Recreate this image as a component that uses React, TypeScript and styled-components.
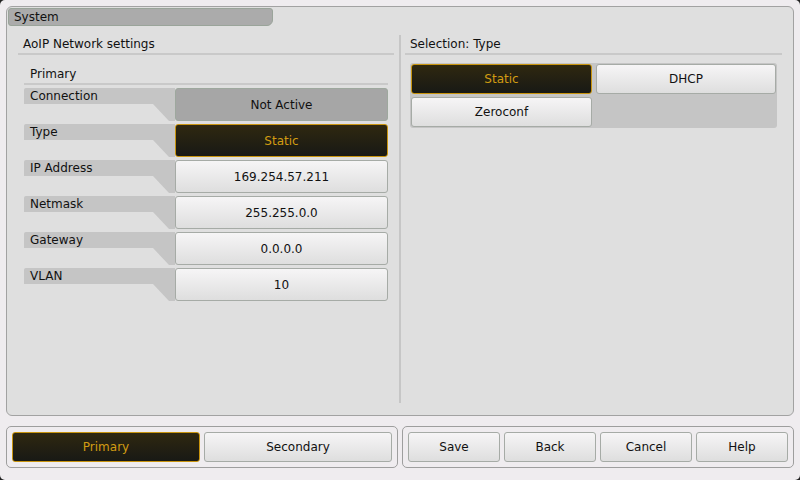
import styled, { createGlobalStyle, css } from "styled-components";

const GlobalStyle = createGlobalStyle`
  html, body {
    margin: 0;
    padding: 0;
    background: #222;
  }
  * {
    box-sizing: border-box;
  }
`;

const Screen = styled.div`
  width: 800px;
  height: 480px;
  background: #efecef;
  border-radius: 5px;
  padding: 6px 6px 0 6px;
  font-family: "DejaVu Sans", "Liberation Sans", sans-serif;
  font-size: 12px;
  color: #111;
  display: flex;
  flex-direction: column;
  overflow: hidden;
`;

const MainPanel = styled.div`
  height: 410px;
  background: #dfdfdf;
  border: 1px solid #a2a2a2;
  border-radius: 6px;
  padding: 1px;
  display: flex;
  flex-direction: column;
`;

const TitleTab = styled.div`
  width: 265px;
  height: 18px;
  background: #ababab;
  border: 1px solid #9aa49a;
  border-radius: 3px 3px 6px 3px;
  padding-left: 5px;
  line-height: 16px;
`;

const Body = styled.div`
  flex: 1;
  display: flex;
  padding: 9px 0 11px 10px;
`;

const Column = styled.div<{ width: number }>`
  width: ${(p) => p.width}px;
  display: flex;
  flex-direction: column;
`;

const Divider = styled.div`
  width: 2px;
  background: #c6c6c6;
  margin: 0 4px 0 5px;
`;

const SectionTitle = styled.div`
  height: 20px;
  line-height: 18px;
  padding-left: 5px;
  border-bottom: 2px solid #c9c9c9;
`;

const SubTitle = styled.div`
  height: 20px;
  line-height: 18px;
  margin: 10px 6px 3px 6px;
  padding-left: 6px;
  border-bottom: 2px solid #c9c9c9;
`;

const Rows = styled.div`
  display: flex;
  flex-direction: column;
  gap: 3px;
  margin: 0 6px;
`;

const Row = styled.div`
  display: flex;
  height: 33px;
`;

const Label = styled.div`
  width: 151px;
  height: 33px;
  background: #c5c5c5;
  border-radius: 2px 0 0 2px;
  clip-path: polygon(0 0, 100% 0, 100% 100%, 145px 100%, 129px 16px, 0 16px);
  padding-left: 6px;
  line-height: 16px;
`;

const buttonBase = css`
  display: flex;
  align-items: center;
  justify-content: center;
  border-radius: 3px;
  font-family: inherit;
  font-size: 12px;
  padding: 0;
`;

const Button = styled.div<{ $variant?: "normal" | "active" | "disabled" }>`
  ${buttonBase}
  ${(p) =>
    p.$variant === "active"
      ? css`
          background: linear-gradient(#2f2810, #181915);
          border: 1px solid #c8940e;
          color: #d29c12;
        `
      : p.$variant === "disabled"
      ? css`
          background: #a6a6a6;
          border: 1px solid #9ea89e;
          color: #111;
        `
      : css`
          background: linear-gradient(#f6f5f6, #dedede);
          border: 1px solid #a6aba6;
          color: #111;
        `}
`;

const ValueButton = styled(Button)`
  flex: 1;
`;

const Options = styled.div`
  margin: 8px 5px 0 5px;
  background: #c5c5c5;
  border-radius: 3px;
  padding: 1px;
  display: grid;
  grid-template-columns: 181px 180px;
  grid-auto-rows: 30px;
  gap: 3px 4px;
`;

const BottomBar = styled.div`
  display: flex;
  gap: 4px;
  margin-top: 10px;
`;

const Group = styled.div`
  width: 392px;
  height: 42px;
  border: 1px solid #9e9e9e;
  border-radius: 5px;
  padding: 5px;
  display: flex;
  gap: 4px;
`;

const GroupButton = styled(Button)`
  flex: 1;
`;

const rows = [
  { label: "Connection", value: "Not Active", variant: "disabled" as const },
  { label: "Type", value: "Static", variant: "active" as const },
  { label: "IP Address", value: "169.254.57.211" },
  { label: "Netmask", value: "255.255.0.0" },
  { label: "Gateway", value: "0.0.0.0" },
  { label: "VLAN", value: "10" },
];

const App = () => {
  return (
    <>
      <GlobalStyle />
      <Screen>
        <MainPanel>
          <TitleTab>System</TitleTab>
          <Body>
            <Column width={376}>
              <SectionTitle>AoIP Network settings</SectionTitle>
              <SubTitle>Primary</SubTitle>
              <Rows>
                {rows.map((r) => (
                  <Row key={r.label}>
                    <Label>{r.label}</Label>
                    <ValueButton $variant={r.variant}>{r.value}</ValueButton>
                  </Row>
                ))}
              </Rows>
            </Column>
            <Divider />
            <Column width={377}>
              <SectionTitle>Selection: Type</SectionTitle>
              <Options>
                <Button $variant="active">Static</Button>
                <Button>DHCP</Button>
                <Button>Zeroconf</Button>
              </Options>
            </Column>
          </Body>
        </MainPanel>
        <BottomBar>
          <Group>
            <GroupButton $variant="active">Primary</GroupButton>
            <GroupButton>Secondary</GroupButton>
          </Group>
          <Group>
            <GroupButton>Save</GroupButton>
            <GroupButton>Back</GroupButton>
            <GroupButton>Cancel</GroupButton>
            <GroupButton>Help</GroupButton>
          </Group>
        </BottomBar>
      </Screen>
    </>
  );
};

export default App;
